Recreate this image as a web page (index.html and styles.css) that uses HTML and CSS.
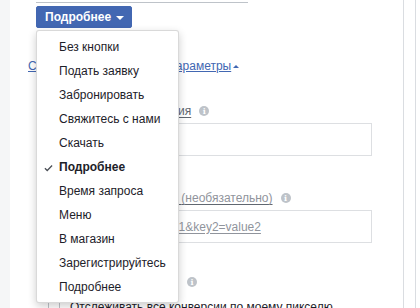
FILE: index.html
```html
<!DOCTYPE html>
<html lang="ru">
<head>
<meta charset="utf-8">
<link rel="stylesheet" href="styles.css">
</head>
<body>
<div class="page">
  <div class="strip"></div>
  <div class="card">
    <div class="prev-input"></div>
    <div class="btn-wrap">
      <button class="btn">Подробнее <span class="caret"></span></button>
      <ul class="menu">
        <li>Без кнопки</li>
        <li>Подать заявку</li>
        <li>Забронировать</li>
        <li>Свяжитесь с нами</li>
        <li>Скачать</li>
        <li class="selected"><svg class="check" viewBox="0 0 10 8" width="9" height="8"><path d="M1 4.2 L3.6 6.8 L9 1.2" fill="none" stroke="#4b4f56" stroke-width="1.4"/></svg>Подробнее</li>
        <li>Время запроса</li>
        <li>Меню</li>
        <li>В магазин</li>
        <li>Зарегистрируйтесь</li>
        <li>Подробнее</li>
      </ul>
    </div>
    <a class="toggle">Скрыть дополнительные параметры<span class="up"></span></a>
    <div class="field f1">
      <div class="label"><span class="lt">Текст ссылки объявления</span><span class="info">i</span></div>
      <div class="input"></div>
    </div>
    <div class="field f2">
      <div class="label"><span class="lt">Параметры URL-адреса <span class="opt">(необязательно)</span></span><span class="info">i</span></div>
      <div class="input"><span class="ph">Например: key1=value1&amp;key2=value2</span></div>
    </div>
    <div class="field f3">
      <div class="label"><span class="lt">Конверсии</span><span class="info">i</span></div>
    </div>
    <div class="check-row"><span class="box"></span><span>Отслеживать все конверсии по моему пикселю</span></div>
  </div>
  <div class="side"></div>
</div>
</body>
</html>
```
FILE: styles.css
```css
html, body {
  margin: 0;
  padding: 0;
}
body {
  width: 420px;
  height: 308px;
  overflow: hidden;
  background: #ffffff;
  font-family: "Liberation Sans", Arial, sans-serif;
  font-size: 12px;
  color: #1d2129;
}
.page {
  display: flex;
  height: 308px;
}
.strip {
  width: 10px;
  background: #f5f6f7;
}
.card {
  width: 394px;
  border-right: 1px solid #dadde1;
  padding-left: 18px;
  box-sizing: border-box;
  background: #fff;
}
.side {
  width: 11px;
  border-right: 1px solid #dadde1;
}
.prev-input {
  margin-left: 8px;
  width: 212px;
  height: 2px;
  border-bottom: 1px solid #bec3c9;
}
.btn-wrap {
  position: relative;
  margin-left: 8px;
  margin-top: 3px;
  height: 22px;
}
.btn {
  display: flex;
  align-items: center;
  gap: 5px;
  height: 22px;
  width: 96px;
  padding: 0 0 0 8px;
  border: 1px solid #4267b2;
  border-radius: 2px;
  background: #4267b2;
  color: #fff;
  font-family: "Liberation Sans", Arial, sans-serif;
  font-weight: bold;
  font-size: 12px;
}
.caret {
  width: 0;
  height: 0;
  border-left: 4px solid transparent;
  border-right: 4px solid transparent;
  border-top: 4px solid #fff;
  margin-top: 1px;
}
.menu {
  position: absolute;
  left: 0;
  top: 24px;
  z-index: 5;
  width: 143px;
  margin: 0;
  padding: 4px 0 3px;
  list-style: none;
  background: #fff;
  border: 1px solid rgba(0, 0, 0, 0.15);
  border-radius: 3px;
  box-shadow: 0 3px 8px rgba(0, 0, 0, 0.2);
  box-sizing: border-box;
}
.menu li {
  position: relative;
  height: 24px;
  line-height: 24px;
  padding-left: 22px;
  color: #1d2129;
  white-space: nowrap;
}
.menu li.selected {
  font-weight: bold;
}
.check {
  position: absolute;
  left: 7px;
  top: 9px;
}
.toggle {
  display: inline-flex;
  align-items: center;
  margin-top: 31px;
  color: #4267b2;
  text-decoration: underline;
  text-decoration-color: #4267b2;
  height: 14px;
  line-height: 14px;
}
.up {
  display: inline-block;
  width: 0;
  height: 0;
  margin-left: 2px;
  border-left: 3px solid transparent;
  border-right: 3px solid transparent;
  border-bottom: 3px solid #4267b2;
}
.field {
  margin-left: 8px;
}
.f1 { margin-top: 31px; }
.f2 { margin-top: 35px; }
.f3 { margin-top: 32px; }
.label {
  display: flex;
  align-items: center;
  height: 14px;
  line-height: 14px;
  color: #606770;
}
.lt {
  text-decoration: underline;
  text-decoration-color: #606770;
  text-underline-offset: 2px;
  padding-left: 12px;
}
.f2 .lt {
  padding-left: 7px;
}
.f3 .lt {
  padding-left: 0;
  width: 143px;
  white-space: nowrap;
}
.opt {
  color: #90949c;
}
.info {
  display: inline-flex;
  align-items: center;
  justify-content: center;
  flex: none;
  width: 10px;
  height: 10px;
  margin-left: 8px;
  border-radius: 50%;
  background: #bec3c9;
  color: #fff;
  font-size: 8px;
  font-weight: bold;
  font-family: "DejaVu Serif", serif;
  line-height: 10px;
}
.input {
  margin-top: 5px;
  width: 336px;
  height: 33px;
  border: 1px solid #dddfe2;
  box-sizing: border-box;
  display: flex;
  align-items: center;
  padding-left: 17px;
  color: #90949c;
}
.ph {
  text-decoration: underline;
  text-decoration-color: #90949c;
  text-underline-offset: 2px;
}
.check-row {
  display: flex;
  align-items: center;
  gap: 10px;
  margin-left: 20px;
  margin-top: 11px;
  font-size: 12px;
  color: #1d2129;
  white-space: nowrap;
}
.box {
  width: 10px;
  height: 10px;
  border: 1px solid #bec3c9;
  border-radius: 2px;
}
```
